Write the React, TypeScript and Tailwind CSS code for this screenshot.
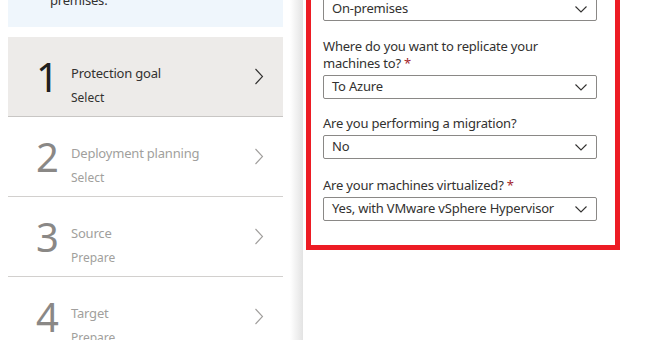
import React from "react";

const font = { fontFamily: '"Noto Sans", "Open Sans", sans-serif' };

const steps = [
  { n: "1", title: "Protection goal", sub: "Select", active: true },
  { n: "2", title: "Deployment planning", sub: "Select", active: false },
  { n: "3", title: "Source", sub: "Prepare", active: false },
  { n: "4", title: "Target", sub: "Prepare", active: false },
];

function ChevronRight({ className }: { className?: string }) {
  return (
    <svg width="10" height="17" viewBox="0 0 10 17" className={className}>
      <path d="M1.5 1 L8.5 8.5 L1.5 16" fill="none" stroke="currentColor" strokeWidth="1.1" />
    </svg>
  );
}

function ChevronDown() {
  return (
    <svg width="12" height="7" viewBox="0 0 12 7" className="text-[#323130]">
      <path d="M0.5 0.5 L6 6 L11.5 0.5" fill="none" stroke="currentColor" strokeWidth="1.1" />
    </svg>
  );
}

function Select({ value }: { value: string }) {
  return (
    <div className="flex h-[24px] w-[274px] items-center justify-between rounded-[2px] border border-[#8a8886] pl-[8px] pr-[9px] text-[13px] tracking-[-0.2px] text-[#323130]">
      <span>{value}</span>
      <ChevronDown />
    </div>
  );
}

function Label({ children, required }: { children: React.ReactNode; required?: boolean }) {
  return (
    <div className="mb-[3px] w-[260px] text-[13px] leading-[17px] tracking-[-0.2px] text-[#323130]">
      {children}
      {required && <span className="text-[#a4262c]"> *</span>}
    </div>
  );
}

export default function App() {
  return (
    <div className="flex h-[340px] w-[660px] overflow-hidden bg-white" style={font}>
      {/* wizard steps */}
      <div className="w-[290px] shrink-0 pl-[8px] pr-[7px]">
        <div className="h-[27px] overflow-hidden bg-[#eff6fc] pl-[42px]">
          <p className="-mt-[42px] text-[13px] leading-[17px] tracking-[-0.2px] text-[#323130]">
            Select the scenario to replicate machines from on-
            <br />
            premises.
          </p>
        </div>
        <div className="mt-[10px]">
          {steps.map((s) => (
            <div
              key={s.n}
              className={
                "flex h-[80px] items-center border-b pl-[28px] pr-[19px] " +
                (s.active ? "border-[#c8c6c4] bg-[#edebe9]" : "border-[#d2d0ce]")
              }
            >
              <div
                className={
                  "w-[35px] text-[40px] font-normal leading-none " +
                  (s.active ? "text-[#201f1e]" : "text-[#8a8886]")
                }
              >
                {s.n}
              </div>
              <div className="mt-[16px] flex-1">
                <div
                  className={
                    "text-[13px] leading-[18px] tracking-[-0.2px] " +
                    (s.active ? "text-[#323130]" : "text-[#a19f9d]")
                  }
                >
                  {s.title}
                </div>
                <div
                  className={
                    "mt-[8px] text-[12px] leading-[16px] " + (s.active ? "text-[#323130]" : "text-[#a19f9d]")
                  }
                >
                  {s.sub}
                </div>
              </div>
              <ChevronRight className={s.active ? "text-[#323130]" : "text-[#a19f9d]"} />
            </div>
          ))}
        </div>
      </div>

      {/* blade edge shadow */}
      <div className="w-[13px] shrink-0 bg-gradient-to-r from-white to-[#e3e3e3]" />

      {/* form */}
      <div className="flex-1 pl-[3px]">
        <div className="-mt-[10px] w-[314px] border-[5px] border-[#ed1c24] pb-[24px] pl-[12px] pt-[2px]">
          <Select value="On-premises" />
          <div className="mt-[17px]">
            <Label required>Where do you want to replicate your machines to?</Label>
            <Select value="To Azure" />
          </div>
          <div className="mt-[16px]">
            <Label>Are you performing a migration?</Label>
            <Select value="No" />
          </div>
          <div className="mt-[18px]">
            <Label required>Are your machines virtualized?</Label>
            <Select value="Yes, with VMware vSphere Hypervisor" />
          </div>
        </div>
      </div>
    </div>
  );
}
